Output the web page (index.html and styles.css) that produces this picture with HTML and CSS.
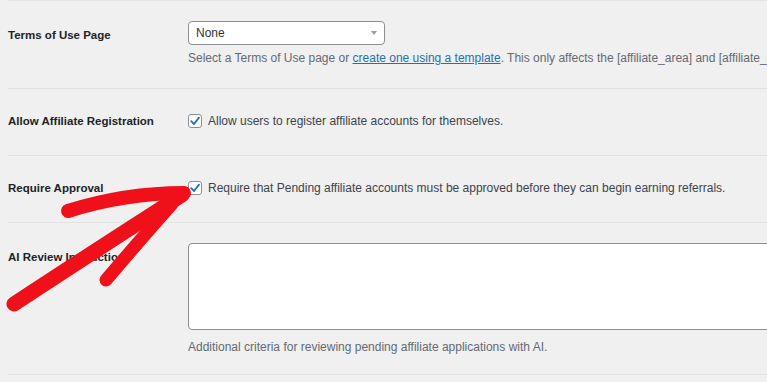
FILE: index.html
```html
<!DOCTYPE html>
<html lang="en">
<head>
<meta charset="UTF-8">
<meta name="viewport" content="width=device-width, initial-scale=1.0">
<title>Affiliate Settings</title>
<link rel="stylesheet" href="styles.css">
</head>
<body>

<div class="settings">
    <div class="row row-terms">
        <div class="row-label">Terms of Use Page</div>
        <div class="row-field">
            <div class="select">
                <span>None</span>
                <span class="select-arrow"></span>
            </div>
            <p class="description">Select a Terms of Use page or <a href="#">create one using a template</a>. This only affects the [affiliate_area] and [affiliate_registration] shortcodes.</p>
        </div>
    </div>

    <div class="row row-check">
        <div class="row-label">Allow Affiliate Registration</div>
        <div class="row-field">
            <label class="check">
                <span class="box">
                    <svg viewBox="0 0 14 14" width="14" height="14"><path d="M3.2 7.2 L6 10 L11 3.6" fill="none" stroke="#2271b1" stroke-width="1.8" stroke-linecap="round" stroke-linejoin="round"/></svg>
                </span>
                Allow users to register affiliate accounts for themselves.
            </label>
        </div>
    </div>

    <div class="row row-check">
        <div class="row-label">Require Approval</div>
        <div class="row-field">
            <label class="check">
                <span class="box">
                    <svg viewBox="0 0 14 14" width="14" height="14"><path d="M3.2 7.2 L6 10 L11 3.6" fill="none" stroke="#2271b1" stroke-width="1.8" stroke-linecap="round" stroke-linejoin="round"/></svg>
                </span>
                Require that Pending affiliate accounts must be approved before they can begin earning referrals.
            </label>
        </div>
    </div>

    <div class="row row-ai">
        <div class="row-label">AI Review Instructions</div>
        <div class="row-field">
            <div class="textarea"></div>
            <p class="description">Additional criteria for reviewing pending affiliate applications with AI.</p>
        </div>
    </div>
</div>

<!-- hand drawn arrow over the page -->
<svg class="scribble" width="767" height="382" viewBox="0 0 767 382">
    <g fill="none" stroke="#f0101a" stroke-linecap="round" stroke-linejoin="round">
        <path d="M182 195 Q110 241 14 304" stroke-width="15"/>
        <path d="M68 211 Q125 193 184 193" stroke-width="14"/>
        <path d="M172 204 Q140 240 106 280" stroke-width="13"/>
    </g>
</svg>

</body>
</html>
```

FILE: styles.css
```css
/* Page */
body {
    margin: 0;
    background-color: #f0f0f1;
    font-family: "Liberation Sans", Arial, sans-serif;
    color: #2c3338;
    overflow: hidden;
}

.settings {
    margin-left: 8px;
    border-top: 1px solid #e6e6e6;
}

/* Rows */
.row {
    display: grid;
    grid-template-columns: 180px 1fr;
    border-bottom: 1px solid #e3e3e3;
}

.row-label {
    font-size: 11.5px;
    font-weight: bold;
    line-height: 16px;
    color: #1d2327;
    white-space: nowrap;
}

.row-field {
    min-width: 0;
    overflow: hidden;
    font-size: 12px;
    line-height: 16px;
}

.row-terms .row-label { padding-top: 26px; }
.row-terms .row-field { padding: 20px 0 22px; }

.row-check .row-label { padding-top: 24px; }
.row-check .row-field { padding: 24px 0 26px; }

.row-ai .row-label { padding-top: 26px; }
.row-ai .row-field { padding: 20px 0 19px; }

/* Select */
.select {
    display: flex;
    align-items: center;
    justify-content: space-between;
    box-sizing: border-box;
    width: 197px;
    height: 24px;
    padding: 0 7px 0 7px;
    background-color: #fff;
    border: 1px solid #8c8f94;
    border-radius: 4px;
    color: #2c3338;
}

.select-arrow {
    width: 0;
    height: 0;
    border-left: 3px solid transparent;
    border-right: 3px solid transparent;
    border-top: 4px solid #9a9ea3;
}

.description {
    margin: 5px 0 0;
    color: #646970;
    white-space: nowrap;
}

.description a {
    color: #2271b1;
}

/* Checkbox */
.check {
    display: flex;
    align-items: center;
    gap: 6px;
    color: #3c434a;
    white-space: nowrap;
}

.box {
    display: flex;
    box-sizing: border-box;
    width: 14px;
    height: 14px;
    background-color: #fff;
    border: 1px solid #8c8f94;
    border-radius: 3px;
    align-items: center;
    justify-content: center;
}

.box svg {
    flex: none;
}

/* Textarea */
.textarea {
    box-sizing: border-box;
    width: 620px;
    height: 87px;
    background-color: #fff;
    border: 1px solid #8c8f94;
    border-radius: 4px;
}

.row-ai .description {
    margin-top: 9px;
}

/* Red arrow overlay */
.scribble {
    position: absolute;
    left: 0;
    top: 0;
    pointer-events: none;
}
```
